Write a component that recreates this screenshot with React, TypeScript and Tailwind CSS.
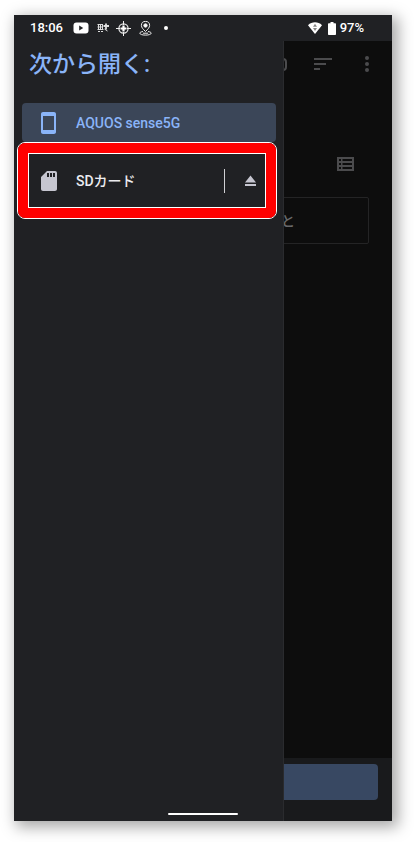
import type { ReactNode } from 'react';
import { clsx } from 'clsx';

function StatusBar() {
  return (
    <header className="relative z-20 flex h-[26px] items-center bg-[#202124] pl-4 pr-7 text-[13px] font-medium text-white">
      <span className="w-[43px]">18:06</span>
      <div className="flex items-center">
        <svg className="h-3 w-4" viewBox="0 0 16 12">
          <rect x="0.5" y="0.5" width="15" height="11" rx="3" fill="#fff" />
          <path d="M6.2 3.6v4.8L10.2 6z" fill="#202124" />
        </svg>
        <svg className="ml-2 h-3 w-3" viewBox="0 0 12 12" fill="none" stroke="#ddd" strokeWidth="1">
          <path d="M.5 2.5h5.500M.5 5h5M.5 7.500h6M1.500 2v6M3.500 2v6M5.500 2v6M1 9.500h2M4 9.500h2M7.500 7l3 2" />
          <path d="M9 1.500v6M6.500 4h5.500" strokeWidth="1.8" />
        </svg>
        <svg className="ml-[7px] h-[15px] w-[15px]" viewBox="0 0 15 15" fill="none" stroke="#eee">
          <circle cx="7.5" cy="7.5" r="4.6" strokeWidth="1.2" />
          <path d="M7.5 0v4M7.5 11v4M0 7.5h4M11 7.5h4" strokeWidth="1" />
          <path d="M7.5 4.5v6M4.5 7.5h6" strokeWidth="2.2" stroke="#fff" />
        </svg>
        <svg className="ml-2 h-[15px] w-[13px]" viewBox="0 0 13 15" fill="none" stroke="#eee" strokeWidth="1">
          <path d="M6.5 10.5C4 8 2.4 6.5 2.4 4.5a4.1 4.1 0 0 1 8.2 0c0 2-1.6 3.5-4.1 6z" />
          <circle cx="6.5" cy="4.5" r="1.7" fill="#fff" />
          <path d="M4 10.5c-2 .3-3.200.9-3.200 1.700 0 1.100 2.500 1.900 5.700 1.900s5.700-.8 5.700-1.900c0-.8-1.200-1.400-3.200-1.700" />
          <path d="M4 12.200h5" />
        </svg>
        <span className="ml-3 size-1 rounded-full bg-white" />
      </div>
      <div className="ml-auto flex items-center">
        <svg className="h-3 w-[14px]" viewBox="0 0 14 12">
          <path d="M0 3.2C4 -0.6 10 -0.6 14 3.2L7 12z" fill="#fff" />
          <path d="M7 1.800l2 3H5zM7 9l-2-3h4z" fill="#888" />
        </svg>
        <svg className="ml-[6px] h-[13px] w-2" viewBox="0 0 8 13" fill="#fff">
          <path d="M2.500 0h3v1.200H7c.6 0 1 .4 1 1V12c0 .6-.4 1-1 1H1c-.6 0-1-.4-1-1V2.200c0-.6.4-1 1-1h1.500z" />
        </svg>
        <span className="ml-1">97%</span>
      </div>
    </header>
  );
}

interface DrawerRowProps {
  icon: ReactNode;
  label: string;
  selected?: boolean;
  children?: ReactNode;
}

function DrawerRow({ icon, label, selected = false, children }: DrawerRowProps) {
  return (
    <li
      className={clsx(
        'relative flex h-[39px] items-center rounded-sm pr-5',
        selected ? 'bg-[#3b4658] text-[#8ab4f8]' : 'text-[#ececf0]'
      )}
    >
      <button type="button" className="flex flex-1 items-center pl-4 text-left text-sm font-medium">
        <span className="flex w-[38px] items-center">{icon}</span>
        {label}
      </button>
      {children}
    </li>
  );
}

function Drawer() {
  return (
    <nav className="absolute inset-y-0 left-0 z-10 w-[270px] border-r border-[#2a2b2e] bg-[#202124] px-[7px] pt-[34px] pl-2">
      <h1 className="pl-[7px] text-[23px] leading-8 font-medium text-[#8ab4f8]">次から開く:</h1>
      <ul className="mt-[22px] flex flex-col gap-[19px]">
        <DrawerRow
          selected
          label="AQUOS sense5G"
          icon={
            <svg className="ml-[3px] h-[22px] w-[15px]" viewBox="0 0 15 22">
              <path
                fillRule="evenodd"
                d="M2 0h11c1.100 0 2 .9 2 2v18c0 1.100-.9 2-2 2H2c-1.100 0-2-.9-2-2V2C0 .9.9 0 2 0zM2 4v14h11V4z"
                fill="#8ab4f8"
              />
            </svg>
          }
        />
        <DrawerRow
          label="SDカード"
          icon={
            <svg className="ml-[3px] h-5 w-4" viewBox="0 0 16 20">
              <path
                fillRule="evenodd"
                d="M6 0h8c1.100 0 2 .9 2 2v16c0 1.100-.9 2-2 2H2c-1.100 0-2-.9-2-2V6zM6 2v4h2V2zM9 2v4h2V2zM12 2v4h2V2z"
                fill="#c6c6d0"
              />
            </svg>
          }
        >
          <span className="h-6 w-px bg-[#d0d0d4]" />
          <button type="button" aria-label="取り外す" className="ml-5">
            <svg className="h-[11px] w-[11px]" viewBox="0 0 11 11" fill="#c6c6d0">
              <path d="M5.500 0.500L11 7.500H0zM0 9h11v2H0z" />
            </svg>
          </button>
          {/* 強調用の赤枠 */}
          <span className="pointer-events-none absolute -inset-y-[19px] -left-[5px] -right-px rounded-lg border border-white">
            <span className="block h-full rounded-[7px] border-10 border-[#ff0000]">
              <span className="block h-full border border-white" />
            </span>
          </span>
        </DrawerRow>
      </ul>
    </nav>
  );
}

function FileBrowser() {
  return (
    <main className="flex flex-1 flex-col bg-[#0d0d0d] text-[#4b4b4d]">
      <div className="flex h-[46px] items-center justify-end pr-[18px]">
        <button type="button" aria-label="新しいフォルダ" className="mr-[27px] h-[13px] w-4 rounded-sm border-2 border-current" />
        <button type="button" aria-label="並べ替え" className="mr-7">
          <svg className="h-3 w-[18px]" viewBox="0 0 18 12" fill="currentColor">
            <path d="M0 0h18v2H0zM0 5h12v2H0zM0 10h6v2H0z" />
          </svg>
        </button>
        <button type="button" aria-label="その他">
          <svg className="h-4 w-[14px]" viewBox="0 0 14 16" fill="currentColor">
            <circle cx="7" cy="2" r="2" />
            <circle cx="7" cy="8" r="2" />
            <circle cx="7" cy="14" r="2" />
          </svg>
        </button>
      </div>
      <div className="mt-[70px] flex justify-end pr-[38px]">
        <button type="button" aria-label="リスト表示">
          <svg className="h-[14px] w-[17px]" viewBox="0 0 17 14">
            <path
              fillRule="evenodd"
              d="M0 0h17v14H0zM2 2v2h2V2zM5.500 2v2H15V2zM2 6v2h2V6zM5.500 6v2H15V6zM2 10v2h2v-2zM5.500 10v2H15v-2z"
              fill="currentColor"
            />
          </svg>
        </button>
      </div>
      <div className="mt-[26px] mr-[23px] ml-6 flex h-[47px] items-center justify-end rounded-xs border border-[#242425] pr-[73px] text-sm font-medium text-[#68686a]">
        と
      </div>
      <div className="mt-auto h-[63px] bg-[#191a1c] px-[14px] pt-[6px]">
        <button type="button" aria-label="このフォルダを使用" className="block h-9 w-full rounded bg-[#384862]" />
      </div>
    </main>
  );
}

export default function App() {
  return (
    <div className="flex min-h-screen bg-white pt-[15px] pr-[22px] pb-[21px] pl-[14px] font-[Roboto,'Noto_Sans_CJK_JP',sans-serif]">
      <div className="relative flex flex-1 flex-col shadow-[4px_4px_14px_2px_rgba(0,0,0,0.35)]">
        <StatusBar />
        <FileBrowser />
        <Drawer />
        <div className="absolute bottom-[6px] left-1/2 z-20 h-[2px] w-[70px] -translate-x-1/2 rounded-full bg-white" />
      </div>
    </div>
  );
}
